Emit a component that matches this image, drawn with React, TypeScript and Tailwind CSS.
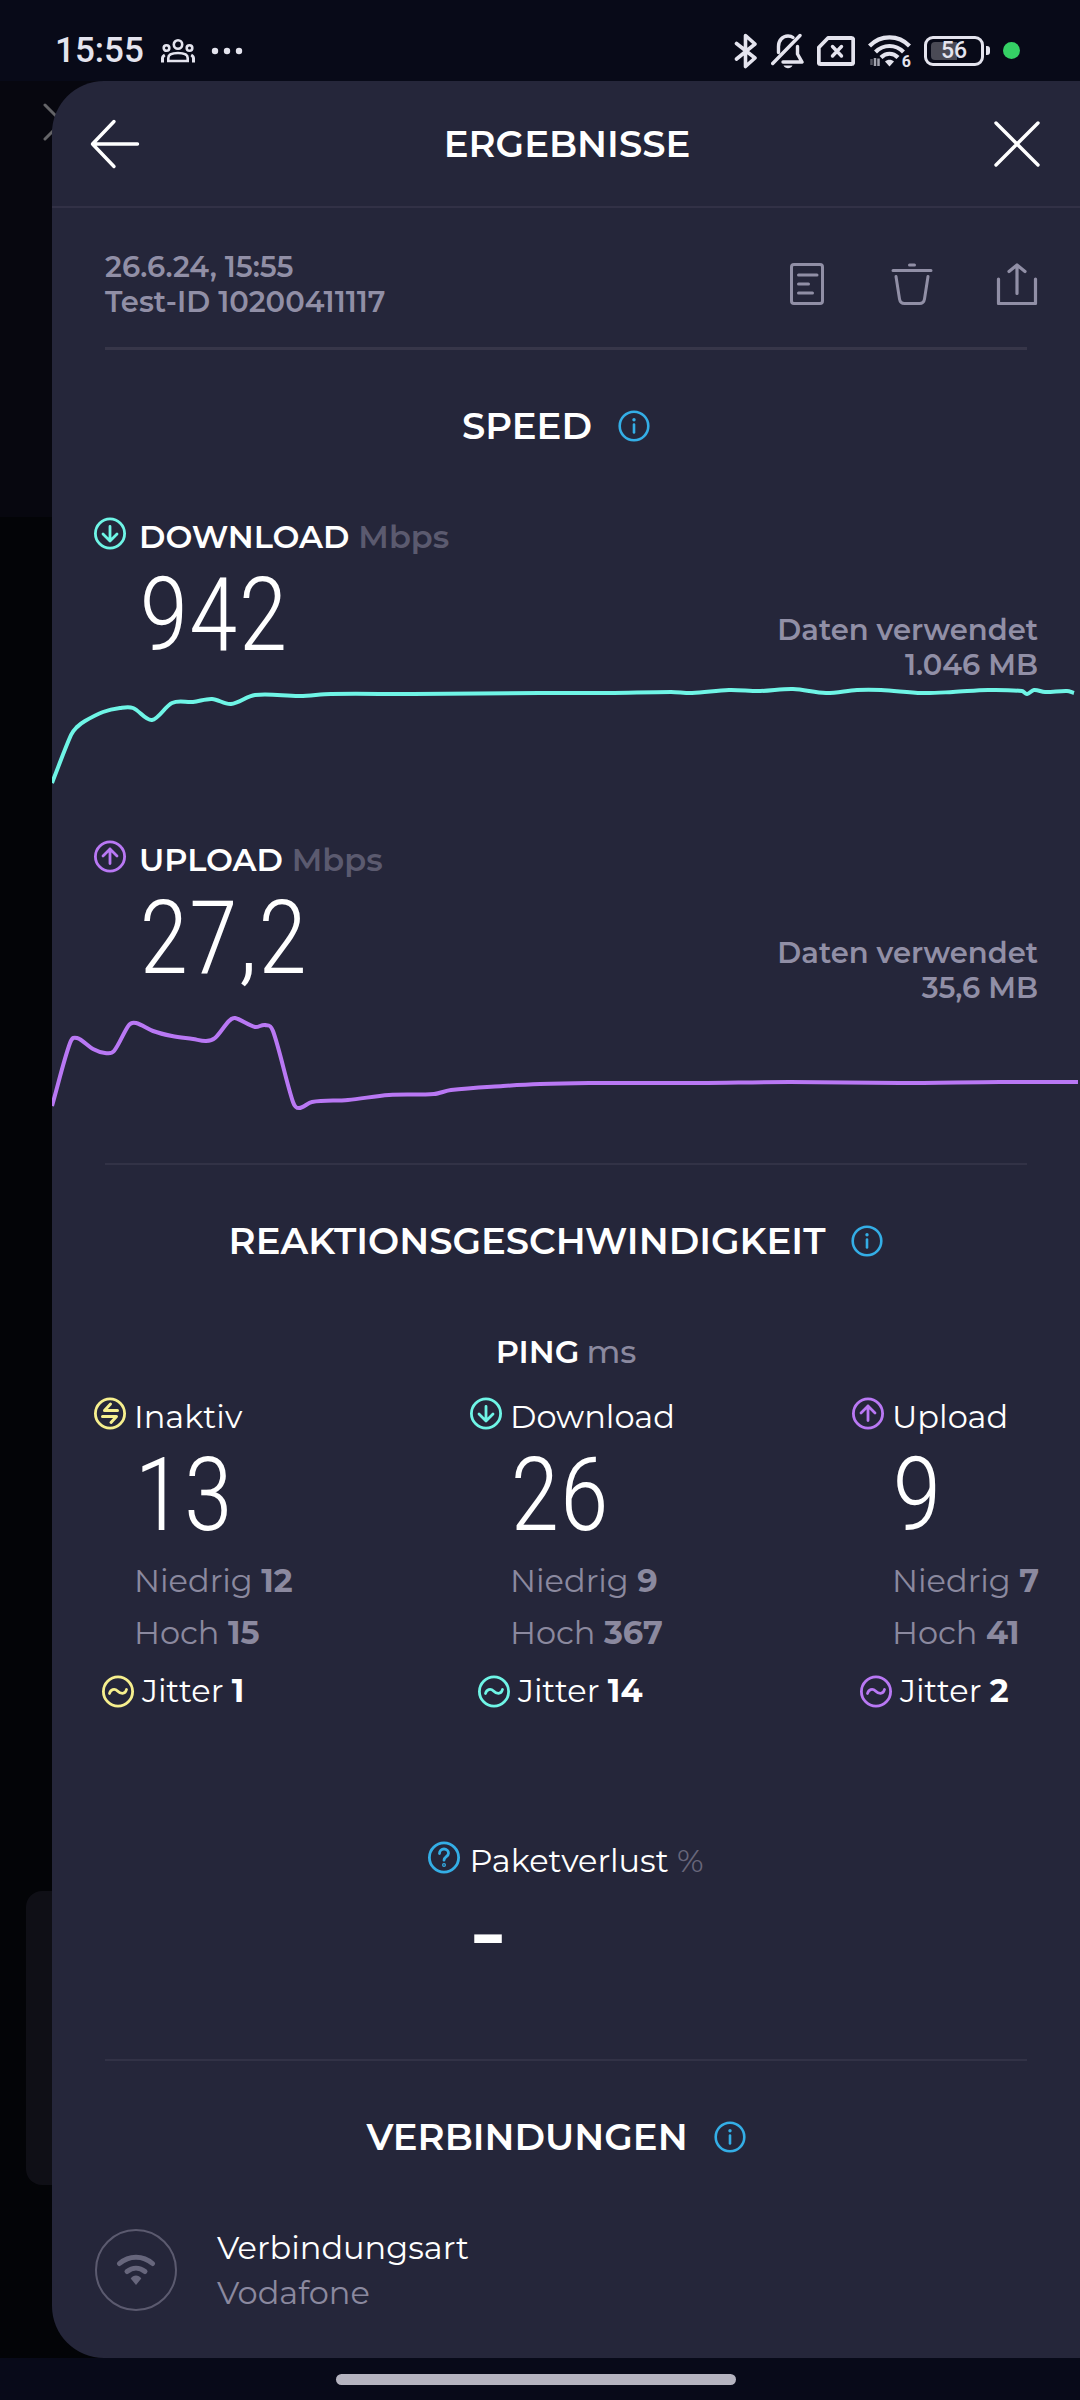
import { ReactNode } from "react";

type Point = [number, number];

interface PingColumnProps {
    label: string;
    value: number;
    low: number;
    high: number;
    jitter: number;
    color: string;
    icon: ReactNode;
    width: string;
}

const TEAL = "#6ff5e6";
const PURPLE = "#b978f4";
const YELLOW = "#f6ef8e";
const BLUE = "#34aee6";

const downloadPoints: Point[] = [
    [0, 101], [19, 53], [25, 45], [33, 39], [51, 30], [68, 26], [81, 26], [100, 38], [120, 21], [141, 20], [160, 17], [179, 22],
    [203, 13], [248, 14], [279, 12], [361, 12], [488, 11], [557, 11], [619, 10], [640, 11], [677, 8], [708, 9], [741, 7],
    [774, 11], [805, 8], [829, 8], [870, 11], [901, 10], [936, 8], [970, 9], [975, 12], [982, 8], [993, 10], [1015, 9], [1022, 11],
];

const uploadPoints: Point[] = [
    [0, 101], [18, 38], [25, 33], [41, 44], [53, 48], [62, 46], [77, 20], [84, 18], [101, 26], [120, 31], [141, 34],
    [154, 36], [163, 33], [177, 16], [183, 13], [203, 22], [213, 20], [221, 26], [241, 97], [247, 103], [260, 97],
    [296, 95], [337, 90], [382, 89], [399, 85], [451, 81], [488, 79], [537, 78], [588, 78], [648, 78], [738, 77],
    [848, 78], [948, 77], [1026, 77],
];

// Catmull-Rom spline, handles kept short where samples are unevenly spaced
function toPath(points: Point[]): string {
    let d = `M${points[0][0]} ${points[0][1]}`;
    for (let i = 0; i < points.length - 1; i++) {
        const p0 = points[i - 1] ?? points[i];
        const p1 = points[i];
        const p2 = points[i + 1];
        const p3 = points[i + 2] ?? p2;
        const span = p2[0] - p1[0];
        const s1 = (p2[1] - p0[1]) / (p2[0] - p0[0]);
        const s2 = (p3[1] - p1[1]) / (p3[0] - p1[0]);
        d += ` C${p1[0] + span / 3} ${p1[1] + (s1 * span) / 3} ${p2[0] - span / 3} ${p2[1] - (s2 * span) / 3} ${p2[0]} ${p2[1]}`;
    }
    return d;
}

function Graph({ points, color }: { points: Point[]; color: string }) {
    return (
        <svg viewBox="0 0 1028 106" preserveAspectRatio="none" className="block w-full h-[106px]" fill="none" aria-hidden="true">
            <path d={toPath(points)} stroke={color} strokeWidth="4" strokeLinejoin="round" />
        </svg>
    );
}

function CircleIcon({ color, children }: { color: string; children: ReactNode }) {
    return (
        <svg width="33" height="33" viewBox="0 0 33 33" fill="none" stroke={color} strokeWidth="2.8" strokeLinecap="round" strokeLinejoin="round" className="shrink-0" aria-hidden="true">
            <circle cx="16" cy="16.5" r="14.6" />
            {children}
        </svg>
    );
}

const DownIcon = () => (
    <CircleIcon color={TEAL}>
        <path d="M16 9.5V24M9 17l7 7 7-7" />
    </CircleIcon>
);

const UpIcon = () => (
    <CircleIcon color={PURPLE}>
        <path d="M16 23.5V9M9 16l7-7 7 7" />
    </CircleIcon>
);

const IdleIcon = () => (
    <CircleIcon color={YELLOW}>
        <path d="M23.5 13.5H10.5L16.5 7M8.5 19.5h14L17 25.5" strokeWidth="3" />
    </CircleIcon>
);

const JitterIcon = ({ color }: { color: string }) => (
    <CircleIcon color={color}>
        <path d="M7.5 18.5c1-4 5-5.5 8-2.500s7.500 4 9-1.500" />
    </CircleIcon>
);

function StatusBar() {
    return (
        <div className="flex items-center justify-between h-[81px] pt-5 pl-[55px] pr-[60px] bg-[#080a18] text-[#e4e4ee]">
            <div className="flex items-center">
                <span className="font-[Roboto] font-medium text-[35px] leading-[40px]">15:55</span>
                <svg width="34" height="24" viewBox="0 0 34 24" fill="none" stroke="currentColor" strokeWidth="2.6" className="ml-[17px]" aria-hidden="true">
                    <circle cx="17" cy="5.5" r="4.2" />
                    <circle cx="5.5" cy="9" r="2.8" />
                    <circle cx="28.5" cy="9" r="2.8" />
                    <path d="M7.3 22v-3c0-3.5 4.5-5 9.7-5s9.7 1.5 9.7 5v3z" />
                    <path d="M1.500 23.500v-4c0-1.500.8-2.700 2.300-3.500M32.500 23.500v-4c0-1.500-.8-2.700-2.300-3.500" strokeWidth="3" />
                </svg>
                <svg width="32" height="8" viewBox="0 0 32 8" fill="currentColor" className="ml-4" aria-hidden="true">
                    <circle cx="4" cy="4" r="3.2" />
                    <circle cx="16" cy="4" r="3.2" />
                    <circle cx="28" cy="4" r="3.2" />
                </svg>
            </div>
            <div className="flex items-center gap-[13px]">
                <svg width="24" height="36" viewBox="0 0 24 36" fill="none" stroke="currentColor" strokeWidth="3.6" strokeLinejoin="round" strokeLinecap="round" aria-hidden="true">
                    <path d="M2.500 10.500L21 25l-9.500 8.500v-31L21 11 2.500 26" />
                </svg>
                <svg width="33" height="36" viewBox="0 0 33 36" fill="none" stroke="currentColor" strokeWidth="3.4" strokeLinecap="round" strokeLinejoin="round" aria-hidden="true">
                    <path d="M1.700 30.500L29 2.500" />
                    <path d="M7.500 19.500v-6c0-6 4-10.500 9.500-10.500 2.200 0 3.800.5 5 1.500" />
                    <path d="M26.500 13.500v7.500l4.500 8H12" />
                    <path d="M12.500 32.500h9c-1 2-2.500 2.700-4.500 2.700s-3.500-.7-4.500-2.700z" fill="currentColor" stroke="none" />
                </svg>
                <svg width="38" height="30" viewBox="0 0 38 30" fill="none" stroke="currentColor" strokeWidth="3.8" strokeLinejoin="round" strokeLinecap="round" aria-hidden="true">
                    <path d="M11 2h23.500c1 0 1.700.7 1.700 1.700v22.600c0 1-.7 1.700-1.700 1.700h-31c-1 0-1.700-.7-1.700-1.700V11.500z" />
                    <path d="M15.500 10.500l9 9.500M24.500 10.500l-9 9.500" strokeWidth="3.4" />
                </svg>
                <div className="relative">
                    <svg width="43" height="34" viewBox="0 0 43 34" fill="none" stroke="currentColor" strokeWidth="4.2" aria-hidden="true">
                        <path d="M1.500 12c11-11.500 29-11.500 40 0" />
                        <path d="M7.500 18c8-8 20-8 28 0" />
                        <path d="M13 23.500c5-5 12-5 17 0" />
                        <path d="M17 27.500c2.500-2.200 6.500-2.200 9 0l-4.500 5z" fill="currentColor" stroke="none" />
                        <path d="M3.500 25v6" strokeWidth="2.500" opacity=".35" />
                        <path d="M7 24v8M10.500 32v-7.500" strokeWidth="2.500" opacity=".7" />
                    </svg>
                    <span className="absolute right-0 -bottom-1 font-[Roboto] font-bold text-[16px] leading-5">6</span>
                </div>
                <div className="flex items-center gap-[2px]">
                    <div className="relative flex items-center justify-center w-[60px] h-[30px] rounded-[9px] border-3 border-current">
                        <span className="absolute left-[4px] top-[3px] w-[26px] h-[18px] rounded-l-[4px] bg-[#4a4a55]" />
                        <span className="relative font-[Roboto] font-medium text-[23px] leading-[24px]">56</span>
                    </div>
                    <span className="w-1 h-[9px] rounded-r-[3px] bg-current" />
                </div>
                <span className="w-[17px] h-[17px] rounded-full bg-[#35d165]" />
            </div>
        </div>
    );
}

function SectionTitle({ children }: { children: string }) {
    return (
        <div className="flex items-center justify-center pr-5 mt-[52px]">
            <h2 className="text-[37px] leading-[48px] font-semibold">{children}</h2>
            <button aria-label={`Info ${children}`} className="ml-[26px]">
                <svg width="32" height="32" viewBox="0 0 32 32" fill="none" stroke={BLUE} strokeWidth="2.6" strokeLinecap="round" aria-hidden="true">
                    <circle cx="16" cy="16" r="14.3" />
                    <path d="M16 14.500v8" />
                    <circle cx="16" cy="9.8" r="1.7" fill={BLUE} stroke="none" />
                </svg>
            </button>
        </div>
    );
}

function SpeedBlock({ title, value, used, icon, points, color }: { title: string; value: string; used: string; icon: ReactNode; points: Point[]; color: string }) {
    return (
        <div>
            <div className="flex items-start gap-3 pl-[42px]">
                {icon}
                <h3 className="text-[32px] leading-[40px] font-semibold">
                    {title} <span className="text-[#5b5a6f]">Mbps</span>
                </h3>
            </div>
            <div className="flex items-start justify-between mt-[17px] pl-[87px] pr-[42px]">
                <span className="font-['Roboto_Condensed'] font-light text-[102px] leading-[82px]">{value}</span>
                <p className="mt-[38px] text-right text-[29px] leading-[35px] font-semibold text-[#918fa6]">
                    Daten verwendet
                    <br />
                    {used}
                </p>
            </div>
            <Graph points={points} color={color} />
        </div>
    );
}

function PingColumn({ label, value, low, high, jitter, color, icon, width }: PingColumnProps) {
    return (
        <div className={`${width} whitespace-nowrap text-[32px]`}>
            <div className="flex items-start gap-[7px] leading-[40px]">
                {icon}
                <h4>{label}</h4>
            </div>
            <div className="pl-10">
                <div className="mt-[17px] font-['Roboto_Condensed'] font-light text-[102px] leading-[82px]">{value}</div>
                <div className="mt-[19px] leading-[52px] text-[#8b899f]">
                    <p>Niedrig <b>{low}</b></p>
                    <p>Hoch <b>{high}</b></p>
                </div>
            </div>
            <div className="flex items-center gap-[7px] mt-3 pl-2 leading-[40px]">
                <JitterIcon color={color} />
                <p>Jitter <b>{jitter}</b></p>
            </div>
        </div>
    );
}

export default function App() {
    return (
        <div className="min-h-screen flex flex-col bg-[#080a18] text-white font-[Montserrat,Inter,sans-serif]">
            <StatusBar />

            <div className="relative flex-1 flex overflow-hidden bg-[#030407]">
                {/* Page left behind the sheet */}
                <div className="absolute inset-x-0 top-0 h-[436px] bg-[#07070f]" />
                <svg width="38" height="38" viewBox="0 0 38 38" className="absolute left-[43px] top-[22px]" stroke="#646468" strokeWidth="3" strokeLinecap="round" aria-hidden="true">
                    <path d="M2 2l34 34M36 2L2 36" />
                </svg>
                <div className="absolute left-[26px] bottom-[173px] w-20 h-[294px] rounded-2xl bg-[#0f0f16]" />

                {/* Results sheet */}
                <main className="relative flex-1 ml-[52px] rounded-l-[52px] bg-[#25263a] pb-[42px]">
                    <header className="flex items-center justify-between h-[127px] pl-[38px] pr-[40px] border-b-2 border-[#323146]">
                        <button aria-label="Zurück">
                            <svg width="50" height="50" viewBox="0 0 50 50" fill="none" stroke="currentColor" strokeWidth="3.4" strokeLinecap="round" strokeLinejoin="round">
                                <path d="M47.500 25H2.500M24 2.500L2.500 25 24 47.500" />
                            </svg>
                        </button>
                        <h1 className="text-[37px] leading-[48px] font-semibold">ERGEBNISSE</h1>
                        <button aria-label="Schließen">
                            <svg width="46" height="46" viewBox="0 0 46 46" fill="none" stroke="currentColor" strokeWidth="3.4" strokeLinecap="round">
                                <path d="M2 2l42 42M44 2L2 44" />
                            </svg>
                        </button>
                    </header>

                    <div className="flex items-center justify-between pt-[41px] pb-7 pl-[53px] pr-[42px] text-[#918fa6]">
                        <p className="text-[29px] leading-[35px] font-semibold">
                            26.6.24, 15:55
                            <br />
                            Test-ID 10200411117
                        </p>
                        <div className="flex gap-[63px]">
                            <button aria-label="Details">
                                <svg width="42" height="42" viewBox="0 0 42 42" fill="none" stroke="currentColor" strokeWidth="3" strokeLinecap="round">
                                    <rect x="5.5" y="1.5" width="31" height="39" rx="2.5" />
                                    <path d="M12.500 12H31M12.500 21h10M12.500 30h14" />
                                </svg>
                            </button>
                            <button aria-label="Löschen">
                                <svg width="42" height="42" viewBox="0 0 42 42" fill="none" stroke="currentColor" strokeWidth="3" strokeLinecap="round" strokeLinejoin="round">
                                    <path d="M2 7.500h38M18.500 2h5" />
                                    <path d="M5 13.500l3.500 22.500c.5 3 2 4.500 5 4.500h15c3 0 4.500-1.500 5-4.500L37 13.500" />
                                </svg>
                            </button>
                            <button aria-label="Teilen">
                                <svg width="42" height="42" viewBox="0 0 42 42" fill="none" stroke="currentColor" strokeWidth="3.2" strokeLinecap="round" strokeLinejoin="round">
                                    <path d="M2.500 16v24.500h37V16" />
                                    <path d="M21 30.500V2.500M13 8.500l8-6.500 8 6.500" />
                                </svg>
                            </button>
                        </div>
                    </div>
                    <hr className="mx-[53px] border-t-3 border-[#373649]" />

                    <section>
                        <SectionTitle>SPEED</SectionTitle>
                        <div className="flex flex-col gap-[52px] mt-[67px] mb-[52px]">
                            <SpeedBlock title="DOWNLOAD" value="942" used="1.046 MB" icon={<DownIcon />} points={downloadPoints} color={TEAL} />
                            <SpeedBlock title="UPLOAD" value="27,2" used="35,6 MB" icon={<UpIcon />} points={uploadPoints} color={PURPLE} />
                        </div>
                    </section>
                    <hr className="mx-[53px] border-t-2 border-[#323246]" />

                    <section>
                        <SectionTitle>REAKTIONSGESCHWINDIGKEIT</SectionTitle>
                        <h3 className="flex justify-center gap-[7px] mt-[67px] text-[32px] leading-[40px] font-semibold">
                            PING <span className="font-medium text-[#8b899f]">ms</span>
                        </h3>
                        <div className="flex justify-between mt-[25px] pl-[42px] pr-[42px]">
                            <PingColumn label="Inaktiv" value={13} low={12} high={15} jitter={1} color={YELLOW} icon={<IdleIcon />} width="w-[198px]" />
                            <PingColumn label="Download" value={26} low={9} high={367} jitter={14} color={TEAL} icon={<DownIcon />} width="w-[204px]" />
                            <PingColumn label="Upload" value={9} low={7} high={41} jitter={2} color={PURPLE} icon={<UpIcon />} width="w-[186px]" />
                        </div>
                        <div className="flex justify-center mt-[130px] mb-[87px]">
                            <div>
                                <div className="flex items-start gap-2 text-[32px] leading-[40px]">
                                    <CircleIcon color={BLUE}>
                                        <path d="M11.500 12.500c0-2.800 2-4.500 4.500-4.500s4.500 1.700 4.500 4.200c0 3.300-4.500 3.500-4.500 7" />
                                        <circle cx="16" cy="24" r=".6" />
                                    </CircleIcon>
                                    <h4>Paketverlust <span className="text-[#68667b]">%</span></h4>
                                </div>
                                <div className="mt-[9px] pl-10 font-medium text-[102px] leading-[82px]">-</div>
                            </div>
                        </div>
                    </section>
                    <hr className="mx-[53px] border-t-2 border-[#323246]" />

                    <section>
                        <SectionTitle>VERBINDUNGEN</SectionTitle>
                        <div className="flex items-center gap-10 mt-[64px] pl-[43px]">
                            <div className="flex items-center justify-center w-[82px] h-[82px] rounded-full border-2 border-[#5b5a6f] text-[#67667c]">
                                <svg width="40" height="32" viewBox="0 0 40 32" fill="none" stroke="currentColor" strokeWidth="5" strokeLinecap="round" aria-hidden="true">
                                    <path d="M3.500 9.500c9.500-8.500 23.500-8.500 33 0" />
                                    <path d="M11 17.500c5.500-4.500 12.500-4.500 18 0" />
                                    <path d="M20 31l-5.300-6.500c2.500-4 8.100-4 10.600 0z" fill="currentColor" stroke="none" />
                                </svg>
                            </div>
                            <div className="text-[32px] leading-[45px]">
                                <p>Verbindungsart</p>
                                <p className="text-[#8b899f]">Vodafone</p>
                            </div>
                        </div>
                    </section>
                </main>
            </div>

            {/* Gesture bar */}
            <div className="flex items-center justify-center h-[42px] pr-2 bg-[#080a19]">
                <span className="w-[400px] h-[11px] rounded-full bg-[#b5b4c0]" />
            </div>
        </div>
    );
}
